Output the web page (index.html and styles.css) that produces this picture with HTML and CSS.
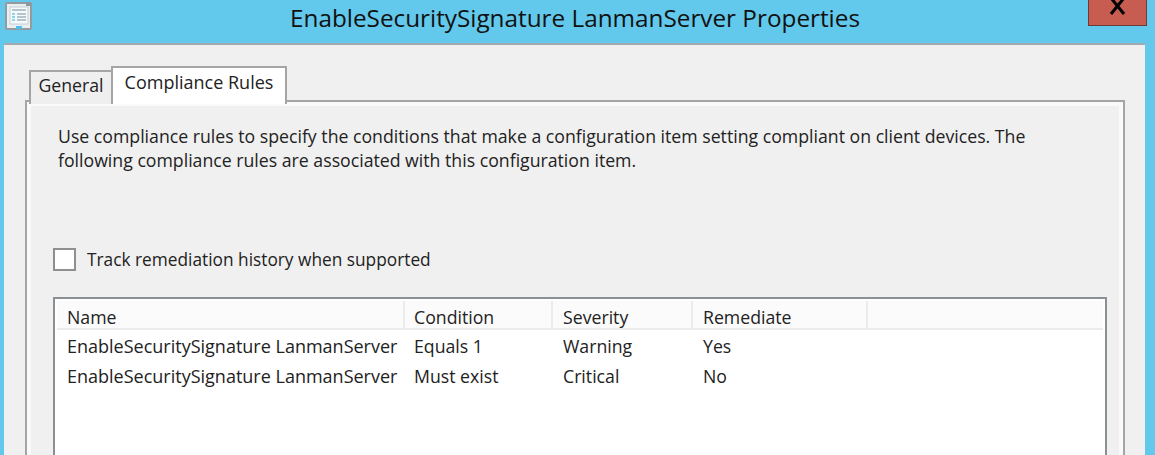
FILE: index.html
```html
<!DOCTYPE html>
<html>

<head>
    <title>EnableSecuritySignature LanmanServer Properties</title>
    <link rel="stylesheet" href="styles.css">
</head>

<body>
    <div class="title-bar">
        <svg class="app-icon" width="28" height="29" viewBox="0 0 28 29">
            <rect x="1" y="2" width="25" height="26" rx="1" fill="#e9eef1" stroke="#949a9e" stroke-width="2" />
            <rect x="21" y="1" width="5" height="4" fill="#8f979c" />
            <rect x="5" y="6" width="18" height="17" fill="#f7fafb" stroke="#c5ced3" />
            <path d="M7 9h14M12 13h9M12 16h9M12 19h9" stroke="#9fb2bd" stroke-width="1.5" />
            <path d="M7 13h3M7 16h3M7 19h3" stroke="#6fc3e3" stroke-width="1.5" />
            <rect x="11" y="25" width="6" height="3" fill="#4fc0ec" />
        </svg>
        <h1 class="title-text">EnableSecuritySignature LanmanServer Properties</h1>
        <div class="close-btn">
            <svg width="18" height="16" viewBox="0 0 18 16">
                <path d="M2 -2L15 14M15 -2L2 14" stroke="#000" stroke-width="3" fill="none" />
            </svg>
        </div>
    </div>

    <div class="dialog">
        <div class="tabs">
            <div class="tab">General</div>
            <div class="tab tab-active">Compliance Rules</div>
        </div>
        <div class="tab-panel">
            <p class="intro">Use compliance rules to specify the conditions that make a configuration item setting compliant on client devices. The following compliance rules are associated with this configuration item.</p>

            <label class="check-row">
                <span class="check-box"></span>
                <span class="check-text">Track remediation history when supported</span>
            </label>

            <div class="rules-list">
                <div class="list-row list-head">
                    <div class="cell">Name</div>
                    <div class="cell">Condition</div>
                    <div class="cell">Severity</div>
                    <div class="cell">Remediate</div>
                </div>
                <div class="list-row">
                    <div class="cell cell-name">EnableSecuritySignature LanmanServer</div>
                    <div class="cell">Equals 1</div>
                    <div class="cell">Warning</div>
                    <div class="cell">Yes</div>
                </div>
                <div class="list-row">
                    <div class="cell cell-name">EnableSecuritySignature LanmanServer</div>
                    <div class="cell">Must exist</div>
                    <div class="cell">Critical</div>
                    <div class="cell">No</div>
                </div>
            </div>
        </div>
    </div>
</body>

</html>
```

FILE: styles.css
```css
html,
body {
    height: 455px;
    overflow: hidden;
}

body {
    margin: 0;
    background-color: #62c8ec;
    font-family: "Open Sans", "Noto Sans", sans-serif;
    font-size: 17.7px;
    color: #222;
}

.title-bar {
    display: flex;
    align-items: flex-start;
    height: 43px;
    padding-left: 5px;
    padding-right: 8px;
}

.app-icon {
    flex: none;
    margin-top: 1px;
}

.title-text {
    flex: 1;
    margin: 5px 0 0;
    padding-left: 29px;
    text-align: center;
    font-size: 24.3px;
    font-weight: 400;
    line-height: 26px;
    color: #111;
}

.close-btn {
    flex: none;
    display: flex;
    justify-content: center;
    align-items: flex-start;
    box-sizing: border-box;
    width: 59px;
    height: 26px;
    background-color: #c75c50;
    border: 1px solid #6e3a34;
    border-top: none;
}

.dialog {
    box-sizing: border-box;
    height: 412px;
    margin-left: 4px;
    margin-right: 10px;
    padding: 21px 20px 0 21px;
    background-color: #f0f0f0;
    border-top: 2px solid #a3abb0;
    overflow: hidden;
}

.tabs {
    display: flex;
    align-items: flex-end;
    height: 38px;
    padding-left: 4px;
    margin-bottom: -4px;
    position: relative;
}

.tab {
    box-sizing: border-box;
    height: 34px;
    width: 84px;
    text-align: center;
    line-height: 26px;
    background-color: #efefef;
    border: 2px solid #a5a5a5;
    border-bottom: none;
}

.tab-active {
    height: 38px;
    width: 176px;
    margin-left: -2px;
    padding-top: 1px;
    font-size: 18px;
    background-color: #fff;
    position: relative;
    z-index: 1;
}

.tab-panel {
    box-sizing: border-box;
    height: 400px;
    padding: 22px 16px 0 26px;
    border: 2px solid #a5a5a5;
    background-color: #f0f0f0;
    box-shadow: inset 4px 4px 0 #fafafa, inset -4px 0 0 #fafafa;
}

.intro {
    max-width: 980px;
    margin: 0;
    padding-left: 5px;
    line-height: 24px;
}

.check-row {
    display: flex;
    align-items: center;
    gap: 11px;
    margin-top: 75px;
    height: 24px;
}

.check-text {
    font-size: 17.3px;
    padding-top: 1px;
}

.check-box {
    box-sizing: border-box;
    width: 23px;
    height: 23px;
    background-color: #fff;
    border: 2px solid #8f8f8f;
}

.rules-list {
    height: 200px;
    margin-top: 26px;
    padding: 2px;
    background-color: #fff;
    border: 2px solid #8b9094;
}

.list-row {
    display: grid;
    grid-template-columns: 348px 148px 140px 175px;
    height: 30px;
    line-height: 33px;
}

.list-head {
    box-sizing: border-box;
    grid-template-rows: 27px;
    height: 29px;
    background-color: #fbfbfb;
    border-bottom: 2px solid #ececec;
}

.cell {
    padding-left: 10px;
    white-space: nowrap;
}

.cell:nth-child(2) {
    padding-left: 9px;
}

.cell-name {
    font-size: 18px;
}

.list-head .cell {
    border-right: 2px solid #ececec;
}
```
